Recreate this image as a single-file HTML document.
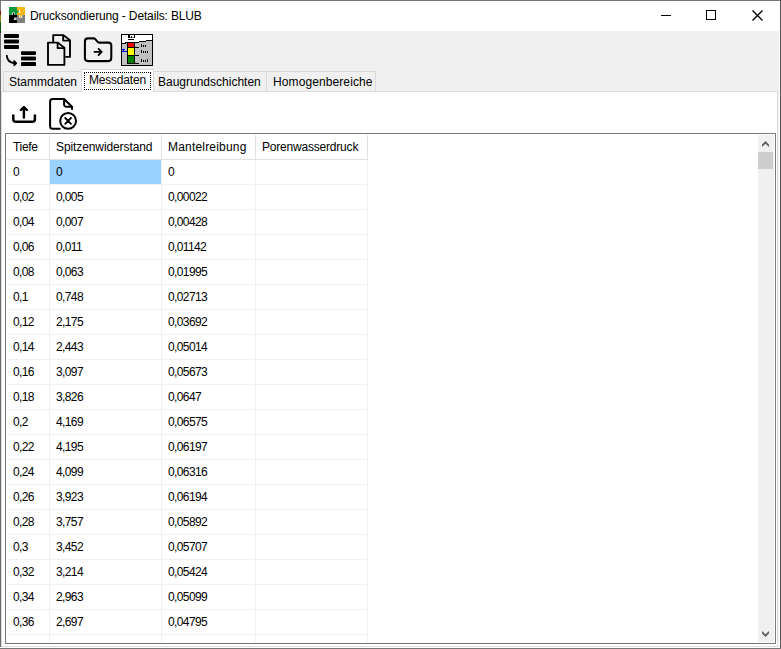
<!DOCTYPE html>
<html lang="de"><head><meta charset="utf-8"><title>Drucksondierung - Details: BLUB</title>
<style>
html,body{margin:0;padding:0;}
body{width:781px;height:649px;overflow:hidden;background:#fff;font-family:"Liberation Sans",sans-serif;font-size:12px;color:#000;position:relative;}
.abs{position:absolute;}
#win{position:absolute;left:0;top:0;width:781px;height:649px;background:#f0f0f0;overflow:hidden;}
#title{position:absolute;left:1px;top:1px;width:779px;height:30px;background:#fff;}
#title .txt{position:absolute;left:29px;top:7px;font-size:12px;line-height:16px;white-space:nowrap;letter-spacing:-0.14px;}
.tab{position:absolute;top:71px;height:20px;border:1px solid #d9d9d9;border-bottom:none;background:#f0f0f0;box-sizing:border-box;line-height:16px;white-space:nowrap;}
.tab span{position:absolute;top:2px;}
#page{position:absolute;left:1px;top:91px;width:777px;height:556px;background:#fff;border:1px solid #dcdcdc;box-sizing:border-box;}
#grid{position:absolute;left:5px;top:133px;width:771px;height:511px;border:1px solid #7a7a7a;background:#fff;box-sizing:border-box;overflow:hidden;}
#cells{position:absolute;left:1px;top:1px;width:751px;height:507px;overflow:hidden;}
.r{height:25px;display:flex;}
.c{box-sizing:border-box;height:25px;border-right:1px solid #f0f0f0;border-bottom:1px solid #f0f0f0;padding-left:6px;line-height:24px;white-space:nowrap;letter-spacing:-0.62px;}
.h .c{border-color:#e0e0e0;letter-spacing:0;}
.c1{width:43px}.c2{width:112px}.c3{width:94px}.c4{width:112px}
.sel{background:#99d1ff;}
.halo{overflow:visible;filter:drop-shadow(0 0 0.7px #fff) drop-shadow(0 0 0.7px #fff);}
#sb{position:absolute;left:752px;top:1px;width:16px;height:507px;background:#f0f0f0;}
#thumb{position:absolute;left:0;top:17px;width:15px;height:17px;background:#cdcdcd;}
</style></head><body>
<div id="win">
 <div class="abs" style="left:0;top:0;width:781px;height:1px;background:#767676"></div>
 <div class="abs" style="left:0;top:0;width:1px;height:649px;background:#6e6e6e"></div>
 <div class="abs" style="left:0;top:1px;width:1px;height:10px;background:#7a7a7a"></div>
 <div class="abs" style="left:0;top:11px;width:1px;height:4px;background:#8b1414"></div>
 <div class="abs" style="left:0;top:15px;width:1px;height:7px;background:#8a8a14"></div>
 <div class="abs" style="left:0;top:22px;width:1px;height:9px;background:#0c5a0c"></div>
 <div class="abs" style="left:0;top:31px;width:1px;height:2px;background:#222"></div>
 <div class="abs" style="left:780px;top:0;width:1px;height:649px;background:#555"></div>
 <div class="abs" style="left:779px;top:31px;width:1px;height:618px;background:#fff"></div>
 <div class="abs" style="left:0;top:647px;width:780px;height:1px;background:#fff"></div>
 <div class="abs" style="left:0;top:648px;width:781px;height:1px;background:#777"></div>
 <div id="title">
  <svg class="abs" style="left:8px;top:6px" width="16" height="16" viewBox="0 0 16 16">
   <rect x="0" y="0" width="8" height="8" fill="#0b9a3c"/><rect x="8" y="0" width="8" height="8" fill="#fdb913"/>
   <rect x="0" y="8" width="8" height="8" fill="#000"/><rect x="8" y="8" width="8" height="8" fill="#808080"/>
   <rect x="9.6" y="3.2" width="1.6" height="2.6" fill="#fff"/>
   <rect x="7.5" y="3.4" width="2.4" height="2.2" rx="0.8" fill="#0b9a3c"/>
   <rect x="2.9" y="5.4" width="3" height="2.6" rx="0.6" fill="#fff"/>
   <rect x="3.8" y="6" width="1.5" height="2.4" rx="0.5" fill="#000"/>
   <rect x="9.9" y="8" width="3.4" height="2.8" rx="0.6" fill="#fff"/>
   <rect x="10.6" y="7.6" width="2" height="2.6" rx="0.8" fill="#fdb913"/>
   <rect x="5.1" y="10.6" width="2.9" height="2.5" rx="0.6" fill="#fff"/>
   <rect x="6.3" y="10.8" width="2.2" height="1.9" rx="0.7" fill="#808080"/>
  </svg>
  <div class="txt">Drucksondierung - Details: BLUB</div>
  <svg class="abs" style="left:641px;top:0" width="138" height="30" viewBox="0 0 138 30" shape-rendering="crispEdges">
   <rect x="19" y="14" width="10" height="1" fill="#000"/>
   <rect x="64.5" y="9.5" width="9" height="9" stroke="#000" stroke-width="1" fill="none"/>
   <path d="M110.5 9.5l10 10M120.5 9.5l-10 10" stroke="#000" stroke-width="1.35" fill="none" shape-rendering="auto"/>
  </svg>
 </div>
 <svg class="abs halo" style="left:4px;top:34px" width="32" height="32" viewBox="0 0 32 32">
  <g fill="#000"><rect x="0" y="0" width="15" height="3.9" rx="0.9"/><rect x="0" y="5.55" width="15" height="3.9" rx="0.9"/><rect x="0" y="11.1" width="15" height="3.9" rx="0.9"/>
  <rect x="17" y="17.2" width="15" height="3.8" rx="0.9"/><rect x="17" y="22.6" width="15" height="3.8" rx="0.9"/><rect x="17" y="28.1" width="15" height="3.9" rx="0.9"/></g>
  <path d="M2.8 21.6 C3 26.2 5.8 29 11.5 29.3" fill="none" stroke="#000" stroke-width="1.8" stroke-linecap="round"/>
  <path d="M10 26.8 L12.4 29.2 L10.2 31.5 Z" fill="#000" stroke="#000" stroke-width="1.5" stroke-linecap="round" stroke-linejoin="round"/>
 </svg>
 <svg class="abs halo" style="left:44px;top:32px" width="32" height="36" viewBox="44 32 32 36">
  <g fill="none" stroke="#000" stroke-width="1.9" stroke-linejoin="round">
   <path d="M53.2 42.6 V35.1 H63.2 L70 40.3 V56.9 H65.3"/>
   <path d="M63.2 35.1 V40.6 H70"/>
   <path d="M48 42.6 H57.6 L64.4 47.8 V64.9 H48 Z"/>
   <path d="M57.6 42.6 V48.1 H64.4"/>
  </g>
 </svg>
 <svg class="abs halo" style="left:80px;top:34px" width="36" height="32" viewBox="80 34 36 32">
  <path d="M84.9 41.4 a3 3 0 0 1 3 -3 H93.6 a2.2 2.2 0 0 1 1.7 0.8 L97.6 41.9 a2 2 0 0 0 1.5 0.7 H108.3 a3 3 0 0 1 3 3 V58.1 a3 3 0 0 1 -3 3 H87.9 a3 3 0 0 1 -3 -3 Z" fill="none" stroke="#000" stroke-width="2.1" stroke-linejoin="round"/>
  <path d="M94.4 51.9 H101.6 M98.6 48.8 L101.8 51.9 L98.6 55" fill="none" stroke="#000" stroke-width="1.8" stroke-linecap="round" stroke-linejoin="round"/>
 </svg>
 <svg class="abs" style="left:121px;top:34px" width="32" height="32" viewBox="0 0 32 32" shape-rendering="crispEdges">
  <rect x="0" y="0" width="32" height="32" fill="#000"/>
  <rect x="1" y="1" width="30" height="30" fill="#c0c0c0"/>
  <rect x="1" y="1" width="30" height="5" fill="#fff"/>
  <rect x="1" y="6" width="24" height="1" fill="#fff"/>
  <rect x="1" y="7" width="17" height="1" fill="#fff"/>
  <rect x="1" y="8" width="4" height="1" fill="#fff"/>
  <rect x="25" y="6" width="6" height="1" fill="#000"/>
  <rect x="18" y="7" width="7" height="1" fill="#000"/>
  <rect x="4" y="8" width="14" height="1" fill="#000"/>
  <rect x="1" y="9" width="4" height="1" fill="#000"/>
  <rect x="6" y="9" width="8" height="21" fill="#000"/>
  <rect x="7" y="9" width="6" height="4" fill="#ff0000"/>
  <rect x="7" y="14" width="6" height="7" fill="#ffff00"/>
  <rect x="7" y="22" width="6" height="7" fill="#008000"/>
  <rect x="14" y="13" width="4" height="1" fill="#000"/>
  <rect x="14" y="21" width="4" height="1" fill="#000"/>
  <rect x="14" y="29" width="4" height="1" fill="#000"/>
  <rect x="1" y="15" width="3" height="1" fill="#0000ff"/><rect x="2" y="16" width="1" height="1" fill="#0000ff"/><rect x="1" y="17" width="5" height="1" fill="#0000ff"/>
  <rect x="7" y="1" width="2" height="3" fill="#000"/><rect x="10" y="2" width="1" height="2" fill="#000"/><rect x="13" y="1" width="1" height="3" fill="#000"/><rect x="9" y="3" width="4" height="1" fill="#000" opacity="0.5"/>
  <rect x="7" y="5" width="6" height="1" fill="#000"/>
  <g fill="#000"><rect x="20" y="10" width="1" height="3"/><rect x="22" y="11" width="1" height="2"/><rect x="24" y="11" width="1" height="2"/>
  <rect x="20" y="16" width="1" height="3"/><rect x="22" y="17" width="1" height="2"/><rect x="24" y="17" width="1" height="2"/><rect x="26" y="17" width="1" height="2"/>
  <rect x="20" y="25" width="1" height="3"/><rect x="22" y="26" width="1" height="2"/><rect x="24" y="26" width="1" height="2"/><rect x="26" y="25" width="1" height="3"/></g>
 </svg>
 <div class="tab" style="left:3px;width:79px;"><span style="left:5px">Stammdaten</span></div>
 <div class="tab" style="left:153px;width:114px;border-left:none"><span style="left:5px">Baugrundschichten</span></div>
 <div class="tab" style="left:267px;width:109px;border-left:none"><span style="left:6px;letter-spacing:0.1px">Homogenbereiche</span></div>
 <div id="page"></div>
 <div class="tab" style="left:81px;top:69px;width:73px;height:23px;background:#fff;"><span style="left:7px;top:2px;letter-spacing:-0.2px">Messdaten</span>
  <div class="abs" style="left:2px;top:2px;width:65px;height:16px;border:1px dotted #000"></div></div>
 <svg class="abs" style="left:8px;top:100px" width="32" height="30" viewBox="8 100 32 30">
  <path d="M13.3 115.6 V119.3 a2.5 2.5 0 0 0 2.5 2.5 H32.4 a2.5 2.5 0 0 0 2.5 -2.5 V115.6" fill="none" stroke="#000" stroke-width="2.5" stroke-linecap="round"/>
  <path d="M23.9 117.4 V107.5 M20.9 110 L23.9 107 L26.9 110" fill="none" stroke="#000" stroke-width="2.45" stroke-linecap="round" stroke-linejoin="round"/>
 </svg>
 <svg class="abs" style="left:46px;top:96px" width="34" height="36" viewBox="46 96 34 36">
  <path d="M59.8 128.8 H52.6 a2.5 2.5 0 0 1 -2.5 -2.5 V101.5 a2.5 2.5 0 0 1 2.5 -2.5 H64.1 L72 106.7 V109" fill="none" stroke="#000" stroke-width="2" stroke-linecap="round" stroke-linejoin="round"/>
  <path d="M64.1 99 V104.6 a2.2 2.2 0 0 0 2.2 2.2 H71.8" fill="none" stroke="#000" stroke-width="2" stroke-linejoin="round"/>
  <circle cx="68.1" cy="120.9" r="7.9" fill="none" stroke="#000" stroke-width="2"/>
  <path d="M65.2 118 L71 123.8 M71 118 L65.2 123.8" fill="none" stroke="#000" stroke-width="1.8" stroke-linecap="round"/>
 </svg>
 <div id="grid">
  <div id="cells">
   <div class="r h"><div class="c c1" style="letter-spacing:-0.3px">Tiefe</div><div class="c c2" style="letter-spacing:-0.1px">Spitzenwiderstand</div><div class="c c3" style="letter-spacing:0.19px">Mantelreibung</div><div class="c c4" style="letter-spacing:-0.2px">Porenwasserdruck</div></div>
<div class="r"><div class="c c1">0</div><div class="c c2 sel">0</div><div class="c c3">0</div><div class="c c4"></div></div>
<div class="r"><div class="c c1">0,02</div><div class="c c2">0,005</div><div class="c c3">0,00022</div><div class="c c4"></div></div>
<div class="r"><div class="c c1">0,04</div><div class="c c2">0,007</div><div class="c c3">0,00428</div><div class="c c4"></div></div>
<div class="r"><div class="c c1">0,06</div><div class="c c2">0,011</div><div class="c c3">0,01142</div><div class="c c4"></div></div>
<div class="r"><div class="c c1">0,08</div><div class="c c2">0,063</div><div class="c c3">0,01995</div><div class="c c4"></div></div>
<div class="r"><div class="c c1">0,1</div><div class="c c2">0,748</div><div class="c c3">0,02713</div><div class="c c4"></div></div>
<div class="r"><div class="c c1">0,12</div><div class="c c2">2,175</div><div class="c c3">0,03692</div><div class="c c4"></div></div>
<div class="r"><div class="c c1">0,14</div><div class="c c2">2,443</div><div class="c c3">0,05014</div><div class="c c4"></div></div>
<div class="r"><div class="c c1">0,16</div><div class="c c2">3,097</div><div class="c c3">0,05673</div><div class="c c4"></div></div>
<div class="r"><div class="c c1">0,18</div><div class="c c2">3,826</div><div class="c c3">0,0647</div><div class="c c4"></div></div>
<div class="r"><div class="c c1">0,2</div><div class="c c2">4,169</div><div class="c c3">0,06575</div><div class="c c4"></div></div>
<div class="r"><div class="c c1">0,22</div><div class="c c2">4,195</div><div class="c c3">0,06197</div><div class="c c4"></div></div>
<div class="r"><div class="c c1">0,24</div><div class="c c2">4,099</div><div class="c c3">0,06316</div><div class="c c4"></div></div>
<div class="r"><div class="c c1">0,26</div><div class="c c2">3,923</div><div class="c c3">0,06194</div><div class="c c4"></div></div>
<div class="r"><div class="c c1">0,28</div><div class="c c2">3,757</div><div class="c c3">0,05892</div><div class="c c4"></div></div>
<div class="r"><div class="c c1">0,3</div><div class="c c2">3,452</div><div class="c c3">0,05707</div><div class="c c4"></div></div>
<div class="r"><div class="c c1">0,32</div><div class="c c2">3,214</div><div class="c c3">0,05424</div><div class="c c4"></div></div>
<div class="r"><div class="c c1">0,34</div><div class="c c2">2,963</div><div class="c c3">0,05099</div><div class="c c4"></div></div>
<div class="r"><div class="c c1">0,36</div><div class="c c2">2,697</div><div class="c c3">0,04795</div><div class="c c4"></div></div>
<div class="r"><div class="c c1"></div><div class="c c2"></div><div class="c c3"></div><div class="c c4"></div></div>
  </div>
  <div id="sb"><div id="thumb"></div>
   <svg class="abs" style="left:0;top:0" width="16" height="17" viewBox="0 0 16 17"><path d="M4 9.6 L7.5 6 L11 9.6 V12 L7.5 8.8 L4 12 Z" fill="#606060"/></svg>
   <svg class="abs" style="left:0;top:490px" width="16" height="17" viewBox="0 0 16 17"><path d="M4 6 L7.5 9.2 L11 6 V8.5 L7.5 12 L4 8.5 Z" fill="#606060"/></svg>
  </div>
 </div>
</div>
</body></html>
